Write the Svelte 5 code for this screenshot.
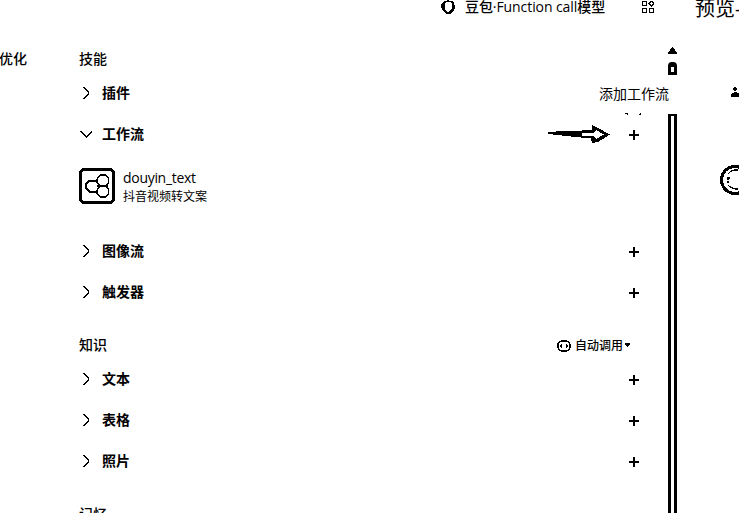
<script>
  const skills = ['图像流', '触发器'];
  const knowledge = ['文本', '表格', '照片'];
</script>

{#snippet chevron(down)}
  <svg class="chev" width="14" height="14" viewBox="0 0 14 14">
    <path d={down ? 'M.5 4.5L6.5 10.2L12.5 4.5' : 'M3.5 1.3L9 7L3.5 12.7'} />
  </svg>
{/snippet}

{#snippet plus()}
  <svg class="plus" width="10" height="10" viewBox="0 0 10 10"><path d="M0 4h10v2H0zM4 0h2v10H4z" /></svg>
{/snippet}

{#snippet row(label, add, open)}
  <div class="row">
    {@render chevron(open)}
    <span class="label">{label}</span>
    {#if add}{@render plus()}{/if}
  </div>
{/snippet}

<div class="page">
  <header>
    <svg class="logo" width="14" height="15" viewBox="0 0 14 15">
      <path fill-rule="evenodd" d="M4 1h2V0h2v1h3l2 2 1 4-1 4-3 2-1 1H6l-3-2-2-2-1-4 1-3zM5 2L4 4v5l1 2 2 1 2-1 2-3V4L9 2z" />
    </svg>
    <span class="model">豆包·Function call模型</span>
    <svg class="apps" width="12" height="12" viewBox="0 0 12 12">
      <path d="M.6.6h4v4h-4zM.6 7.4h4v4h-4zM7.4 7.4h4v4h-4zM9.5.4l2.1 2.1-2.1 2.1-2.1-2.1z" />
    </svg>
    <span class="preview">预览-</span>
  </header>

  <div class="body">
    <aside>优化</aside>
    <main>
      <h2>技能</h2>
      {@render row('插件', false, false)}
      <div class="workflow">
        {@render row('工作流', true, true)}
        <svg class="arrow" width="62" height="18" viewBox="0 0 62 18">
          <path fill-rule="evenodd" d="M0 7L16 6L34 5.500L44 5L44 0L50 3L62 9.500L50 17L44 18L43 13.500L28 12L14 10.500L0 9zM34 8.500V10.500L46 11.500L48 14L56 9.500L48 5L46 7.500z" />
        </svg>
        <div class="tip">添加工作流
          <svg width="18" height="3" viewBox="0 0 18 3"><path d="M1 .5h2v1h1M17 .5h-1v1h-1" /></svg>
        </div>
      </div>
      <div class="item">
        <svg width="36" height="36" viewBox="0 0 36 36">
          <rect x="1.500" y="1.500" width="33" height="33" rx="4" fill="#fff" stroke="#000" stroke-width="3" />
          <g fill="none" stroke="#000">
            <path stroke-width="2" d="M18 12.500h-7l-4 3v5l4 3.500h7M18 18h11M17.500 11v4M17.500 22v4M20.500 17v2" />
            <path stroke-width="1.200" d="M18.500 12V10l3-3h5l3 3v5l-3 3h-5l-3-3zM18.500 24v2l3 3h5l3-3v-5l-3-3h-5l-3 3z" />
          </g>
        </svg>
        <div class="desc">
          <div class="name">douyin_text</div>
          <div class="sub">抖音视频转文案</div>
        </div>
      </div>
      {#each skills as s}{@render row(s, true, false)}{/each}
      <div class="heading">
        <h2>知识</h2>
        <div class="auto">
          <svg width="14" height="12" viewBox="0 0 14 12">
            <rect x=".8" y=".8" width="12.400" height="10.400" rx="5" fill="none" stroke="#000" stroke-width="1.500" />
            <path d="M5 4v4H4V7H3V5h1V4zM9 4v4h1V7h1V5h-1V4z" />
          </svg>
          <span>自动调用</span>
          <svg width="5" height="5" viewBox="0 0 5 5"><path d="M0 0h5v2H4v1H3v1H2V3H1V2H0z" /></svg>
        </div>
      </div>
      {#each knowledge as k}{@render row(k, true, false)}{/each}
      <h2 class="memory">记忆</h2>
    </main>
    <div class="scroll">
      <svg width="9" height="7" viewBox="0 0 9 7"><path d="M4 0h1l4 6v1H0V6z" /></svg>
      <div class="cap"></div>
      <div class="thumb"></div>
    </div>
    <div class="right">
      <svg class="person" width="9" height="10" viewBox="0 0 9 10"><path d="M3 0h2v1h1v2H5v1H3V3H2V1h1zM3 5h3v1h2v1h1v3H0V7h1V6h2z" /></svg>
      <svg class="avatar" width="30" height="30" viewBox="0 0 30 30">
        <circle cx="15" cy="15" r="13.500" fill="none" stroke="#000" stroke-width="3" />
        <path fill="none" stroke="#000" stroke-width="1.300" d="M8 9l3-3 4-1h3M8 15v-2h2M7 17h2M8 20l2 2 5 2h3" />
      </svg>
    </div>
  </div>
</div>

<style>
  :global(body) { margin: 0; background: #fff; }
  .page {
    width: 739px; height: 513px; overflow: hidden; background: #fff; color: #000;
    font: 500 14px/20px "Open Sans", "Noto Sans CJK SC", sans-serif;
    white-space: nowrap;
  }
  svg { display: block; flex: none; shape-rendering: crispEdges; }
  header { height: 47px; display: flex; align-items: flex-start; padding-left: 441px; }
  .model { width: 140px; margin-left: 10px; line-height: 14px; letter-spacing: -.08px; }
  .apps { margin: 1px 0 0 37px; fill: none; stroke: #000; stroke-width: 1.300; }
  .preview { margin-left: 41px; font-size: 20px; line-height: 18px; font-weight: 400; }
  .body { display: flex; height: 466px; }
  aside { width: 79px; padding-top: 2px; box-sizing: border-box; text-indent: -1px; }
  main { width: 561px; padding-top: 2px; box-sizing: border-box; }
  h2 { margin: 0; font-size: 14px; line-height: 20px; font-weight: 500; }
  .row { height: 41px; display: flex; align-items: center; padding-left: 1px; }
  h2 + .row { margin-top: 3px; }
  .label { margin-left: 8px; font-weight: 700; }
  .chev { fill: none; stroke: #000; stroke-width: 1.400; }
  .plus { margin: 2px 1px 0 auto; }
  .workflow { position: relative; }
  .arrow { position: absolute; left: 469px; top: 12px; }
  .tip {
    position: absolute; z-index: 2; left: 507px; top: -37px; width: 96px; height: 38px;
    box-sizing: border-box; padding-left: 13px; line-height: 36px; background: #fff; font-weight: 400;
  }
  .tip svg { position: absolute; left: 38px; top: 37px; fill: none; stroke: #000; }
  .item { height: 76px; display: flex; padding-top: 14px; box-sizing: border-box; }
  .desc { margin-left: 8px; }
  .name { line-height: 19px; font-weight: 400; font-size: 14px; letter-spacing: -.3px; }
  .sub { font-size: 12px; line-height: 20px; font-weight: 400; }
  .heading { display: flex; align-items: center; margin-top: 23px; height: 20px; }
  .heading + :global(.row) { margin-top: 3px; }
  .auto { margin: 1px 0 0 auto; display: flex; align-items: center; font-size: 12px; padding-right: 10px; }
  .auto span { margin: 0 2px 0 4px; }
  .memory { margin-top: 23px; }
  .scroll { width: 9px; margin-left: 28px; display: flex; flex-direction: column; }
  .cap { width: 9px; height: 13px; margin-top: 8px; box-sizing: border-box; border: 3px solid #000; border-width: 5px 3px 3px; border-radius: 4px 4px 0 0; }
  .thumb { width: 9px; height: 400px; margin-top: 38px; box-sizing: border-box; border: 3px solid #000; border-bottom: 0; }
  .right { width: 62px; }
  .person { margin: 40px 0 0 54px; }
  .avatar { margin: 68px 0 0 43px; }
</style>
